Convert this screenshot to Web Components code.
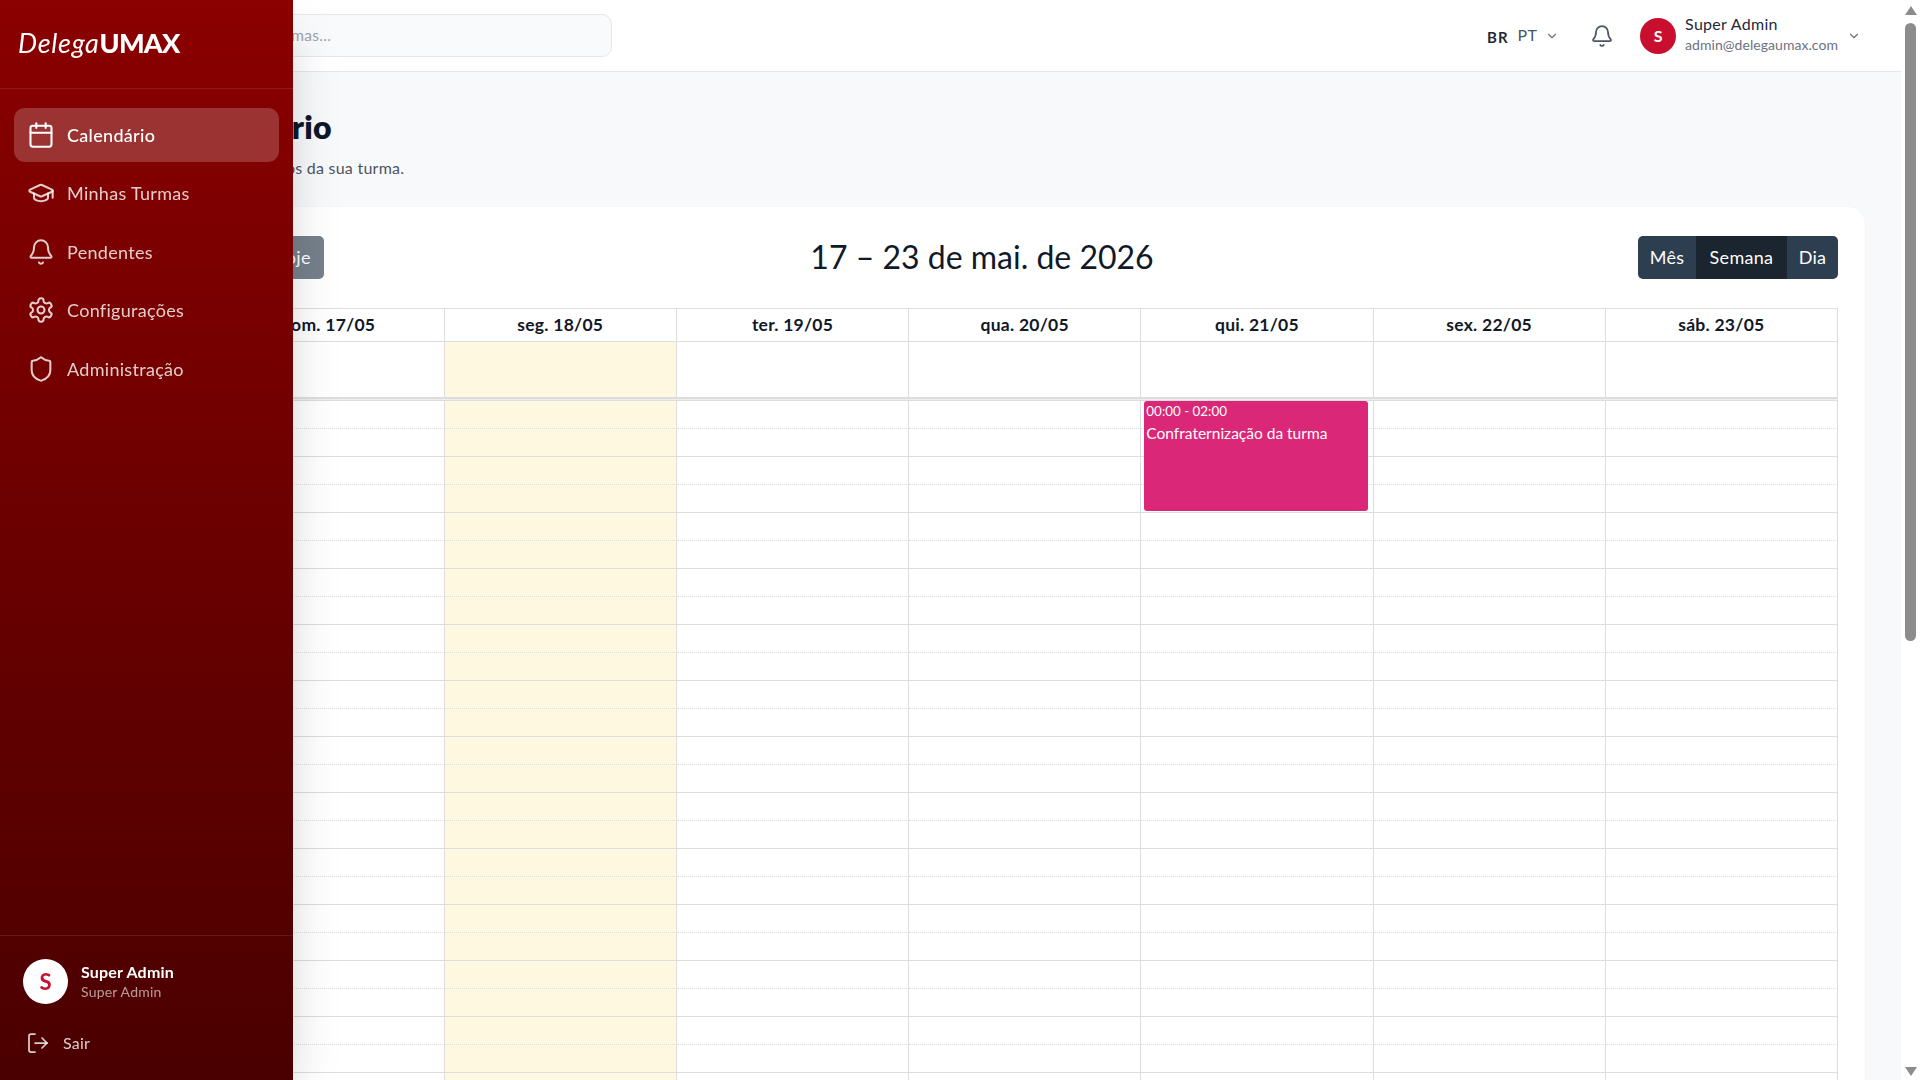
<!DOCTYPE html>
<html lang="pt-BR">
<head>
<meta charset="utf-8">
<title>DelegaUMAX</title>
<style>
html,body{margin:0;height:100%;overflow:hidden;}
body{display:flex;font-family:Lato,"Noto Sans",sans-serif;background:#f8f9fb;color:#111827;}
</style>
</head>
<body>
<app-main>
  <app-topbar></app-topbar>
  <page-head title="Meu Calendário" sub="Veja datas e compromissos da sua turma."></page-head>
  <week-calendar></week-calendar>
</app-main>
<fake-scrollbar></fake-scrollbar>
<app-sidebar></app-sidebar>
<script>
const ICONS={
calendar:'<path d="M8 2v4"/><path d="M16 2v4"/><rect x="3" y="4" width="18" height="18" rx="2"/><path d="M3 10h18"/>',
cap:'<path d="M21.42 10.922a1 1 0 0 0-.019-1.838L12.83 5.18a2 2 0 0 0-1.66 0L2.6 9.08a1 1 0 0 0 0 1.832l8.57 3.908a2 2 0 0 0 1.66 0z"/><path d="M22 10v6"/><path d="M6 12.5V16a6 3 0 0 0 12 0v-3.5"/>',
bell:'<path d="M10.268 21a2 2 0 0 0 3.464 0"/><path d="M3.262 15.326A1 1 0 0 0 4 17h16a1 1 0 0 0 .74-1.673C19.41 13.956 18 12.499 18 8A6 6 0 0 0 6 8c0 4.499-1.411 5.956-2.738 7.326"/>',
gear:'<path d="M12.22 2h-.44a2 2 0 0 0-2 2v.18a2 2 0 0 1-1 1.73l-.43.25a2 2 0 0 1-2 0l-.15-.08a2 2 0 0 0-2.73.73l-.22.38a2 2 0 0 0 .73 2.73l.15.1a2 2 0 0 1 1 1.72v.51a2 2 0 0 1-1 1.74l-.15.09a2 2 0 0 0-.73 2.73l.22.38a2 2 0 0 0 2.73.73l.15-.08a2 2 0 0 1 2 0l.43.25a2 2 0 0 1 1 1.73V20a2 2 0 0 0 2 2h.44a2 2 0 0 0 2-2v-.18a2 2 0 0 1 1-1.73l.43-.25a2 2 0 0 1 2 0l.15.08a2 2 0 0 0 2.73-.73l.22-.39a2 2 0 0 0-.73-2.73l-.15-.08a2 2 0 0 1-1-1.74v-.5a2 2 0 0 1 1-1.74l.15-.09a2 2 0 0 0 .73-2.73l-.22-.38a2 2 0 0 0-2.73-.73l-.15.08a2 2 0 0 1-2 0l-.43-.25a2 2 0 0 1-1-1.73V4a2 2 0 0 0-2-2z"/><circle cx="12" cy="12" r="3"/>',
shield:'<path d="M20 13c0 5-3.5 7.5-7.66 8.95a1 1 0 0 1-.67-.01C7.5 20.5 4 18 4 13V6a1 1 0 0 1 1-1c2 0 4.5-1.2 6.24-2.72a1.17 1.17 0 0 1 1.52 0C14.51 3.81 17 5 19 5a1 1 0 0 1 1 1z"/>',
logout:'<path d="M9 21H5a2 2 0 0 1-2-2V5a2 2 0 0 1 2-2h4"/><path d="m16 17 5-5-5-5"/><path d="M21 12H9"/>',
chev:'<path d="m6 9 6 6 6-6"/>'
};
const icon=(n,s,w=2)=>`<svg width="${s}" height="${s}" viewBox="0 0 24 24" fill="none" stroke="currentColor" stroke-width="${w}" stroke-linecap="round" stroke-linejoin="round">${ICONS[n]}</svg>`;
class Base extends HTMLElement{
  render(html){this.attachShadow({mode:'open'}).innerHTML=html;}
}
customElements.define('app-main',class extends Base{connectedCallback(){this.render(`<style>
:host{display:flex;flex-direction:column;flex:1;min-width:0;height:100vh;overflow:hidden}
</style><slot></slot>`)}});
customElements.define('app-topbar',class extends Base{connectedCallback(){this.render(`<style>
:host{display:flex;flex:none;align-items:center;height:71px;background:#fff;border-bottom:1px solid #e5e7eb;padding:0 40px 0 99px}
.search{border:1px solid #e5e7eb;border-radius:10px;background:#f9fafb;display:flex;align-items:center;padding-left:55px;box-sizing:border-box;width:513px;height:43px;color:#9ca3af;font-size:15.5px;letter-spacing:.3px;padding-bottom:2px}
.right{margin-left:auto;display:flex;align-items:center}
.flag{font-weight:700;font-size:15px;letter-spacing:1px;color:#1f2937;margin-top:2px}
.pt{font-size:16px;color:#4b5563;margin-left:9px;letter-spacing:.2px;margin-top:-2px}
.c1{display:flex;margin-left:8px;color:#6b7280;margin-top:1px}
.bell{display:flex;color:#4b5563;margin-left:31px}
.av{width:36px;height:36px;border-radius:50%;background:#c8102e;color:#fff;font-weight:700;font-size:16px;display:flex;align-items:center;justify-content:center;margin-left:26px}
.who{margin-left:9px;line-height:1;margin-top:-3px}
.n{font-size:16px;color:#1f2937;letter-spacing:.3px;margin-bottom:6px;font-weight:400}
.e{font-size:14px;color:#6b7280;letter-spacing:.05px}
.c2{display:flex;margin-left:9px;color:#6b7280;margin-top:1px}
</style>
<div class="search">Buscar eventos, turmas...</div>
<div class="right">
<span class="flag">BR</span><span class="pt">PT</span><span class="c1">${icon('chev',14)}</span>
<span class="bell">${icon('bell',24,1.75)}</span>
<span class="av">S</span>
<div class="who"><div class="n">Super Admin</div><div class="e">admin@delegaumax.com</div></div>
<span class="c2">${icon('chev',14)}</span>
</div>`)}});
customElements.define('page-head',class extends Base{connectedCallback(){this.render(`<style>
:host{display:block;flex:none;height:135px;box-sizing:border-box;padding:34px 36px 0 99px}
h1{margin:0;font-size:32px;line-height:42px;font-weight:800;color:#0f172a;letter-spacing:.3px}
p{margin:9px 0 0 9px;font-size:16px;line-height:22px;color:#4b5563;letter-spacing:.25px}
</style><h1>${this.getAttribute('title')}</h1><p>${this.getAttribute('sub')}</p>`)}});
customElements.define('week-calendar',class extends Base{connectedCallback(){
const days=['dom. 17/05','seg. 18/05','ter. 19/05','qua. 20/05','qui. 21/05','sex. 22/05','sáb. 23/05'];
let cells='<div class="c h"></div>'+days.map(d=>`<div class="c h">${d}</div>`).join('');
cells+='<div class="c ad"></div>'+days.map((d,i)=>`<div class="c ad${i==1?' today':''}"></div>`).join('');
cells+='<div class="div"></div>';
for(let r=0;r<30;r++){
  cells+=`<div class="c s${r%2?'':' dot'}"></div>`;
  for(let i=0;i<7;i++){
    let ev='';
    if(r==0&&i==4)ev='<div class="ev"><div class="t">00:00 - 02:00</div><div class="ti">Confraternização da turma</div></div>';
    cells+=`<div class="c s${r%2?'':' dot'}${i==1?' today':''}">${ev}</div>`;
  }
}
this.render(`<style>
:host{display:block;flex:none;margin:0 36px 0 99px;background:#fff;border-radius:18px;padding:29px 27px 0;box-shadow:0 1px 3px rgba(0,0,0,.03)}
.bar{display:flex;align-items:center;justify-content:space-between;height:43px;margin-bottom:29px}
.b{height:43px;box-sizing:border-box;display:flex;align-items:center;padding:0 12px 2px;color:#fff;font-size:18px;letter-spacing:.3px;background:#2c3e50}
.left,.right{display:flex;flex:1}
.right{justify-content:flex-end}
.right .b:first-child{border-radius:5px 0 0 5px;width:58px;justify-content:center;padding:0 0 2px}
.right .b:last-child{border-radius:0 5px 5px 0;width:51px;justify-content:center;padding:0 0 2px}
.right .on{background:#1a252f;width:91px;justify-content:center;padding:0 0 2px}
.left{gap:8px}
.nav{width:54.5px;border-radius:5px;justify-content:center;padding:0 0 2px}
.today-b{background:#2c3e50;opacity:.65;border-radius:5px;padding:0 13px 2px;margin-left:8px}
h2{margin:0;font-size:32px;font-weight:400;letter-spacing:0;color:#111827;white-space:nowrap;position:relative;top:-1px}
.grid{display:grid;grid-template-columns:85.5px repeat(7,1fr);border-top:1px solid #ddd;border-left:1px solid #ddd}
.c{border-right:1px solid #ddd;border-bottom:1px solid #ddd;box-sizing:border-box;background:#fff}
.h{height:33px;display:flex;align-items:center;justify-content:center;font-weight:700;font-size:17.5px;letter-spacing:.25px;color:#111827;padding-bottom:1px}
.ad{height:56px}
.div{grid-column:1/-1;height:3px;box-sizing:border-box;background:#eee;border-top:1px solid #ddd;border-bottom:1px solid #ddd}
.s{height:28px;position:relative;font-size:14px;color:#374151}
.dot{border-bottom:1px dotted #ddd}
.today{background:#fef8e0}
.ev{position:absolute;z-index:2;left:3px;right:5px;top:0;height:110px;background:#db2777;border-radius:3px;color:#fff;padding:2px 2px 0;box-sizing:border-box}
.t{font-size:13.4px;line-height:17px}
.ti{font-size:15.5px;line-height:20px;margin-top:3px;white-space:nowrap}
</style>
<div class="bar">
<div class="left"><div class="b nav">‹</div><div class="b nav">›</div><div class="b today-b">Hoje</div></div>
<h2>17 – 23 de mai. de 2026</h2>
<div class="right"><div class="b">Mês</div><div class="b on">Semana</div><div class="b">Dia</div></div>
</div>
<div class="grid">${cells}</div>`)}});
customElements.define('fake-scrollbar',class extends Base{connectedCallback(){this.render(`<style>
:host{display:flex;flex:none;flex-direction:column;align-items:center;width:19px;height:100vh;background:#fff;box-sizing:border-box;padding:6px 0 4px}
.a{width:0;height:0;border-left:6.5px solid transparent;border-right:6.5px solid transparent;flex:none}
.u{border-bottom:9px solid #8c8c8c}
.d{border-top:9px solid #8c8c8c;margin-top:auto}
.th{width:11px;height:618px;background:#8c8c8c;border-radius:6px;margin-top:8px;flex:none}
</style><div class="a u"></div><div class="th"></div><div class="a d"></div>`)}});
customElements.define('nav-item',class extends Base{connectedCallback(){
const on=this.hasAttribute('active');
this.render(`<style>
:host{display:flex;align-items:center;height:54px;border-radius:11px;padding:0 12.5px;gap:12.5px;font-size:18px;letter-spacing:.3px;color:${on?'#fff':'rgba(255,255,255,.8)'};background:${on?'rgba(255,255,255,.2)':'transparent'};font-weight:${on?500:400}}
svg{flex:none;display:block}
</style>${icon(this.getAttribute('icon'),28,1.75)}<slot></slot>`)}});
customElements.define('app-sidebar',class extends Base{connectedCallback(){this.render(`<style>
:host{position:fixed;left:0;top:0;bottom:0;width:293px;z-index:10;display:flex;flex-direction:column;background:linear-gradient(180deg,#8b0000 0%,#4a0000 100%);box-shadow:0 25px 50px -12px rgba(0,0,0,.25);color:#fff}
.logo{height:89px;box-sizing:border-box;flex:none;border-bottom:1px solid rgba(255,255,255,.1);display:flex;align-items:center;padding:0 0 3px 18px;white-space:nowrap;font-size:27px}
.logo i{font-weight:400;letter-spacing:.7px}
.logo b{font-weight:900;letter-spacing:-.8px}
nav{flex:1;display:flex;flex-direction:column;gap:4.4px;padding:19px 14px 0}
.foot{border-top:1px solid rgba(255,255,255,.1);flex:none;height:145px;box-sizing:border-box;padding:23px 23px 0}
.u{display:flex;align-items:center;gap:13px}
.a{width:45px;height:45px;border-radius:50%;background:#fff;color:#c8102e;display:flex;align-items:center;justify-content:center;font-size:22px;font-weight:700}
.n{font-size:16px;font-weight:700;letter-spacing:.2px;line-height:20px}
.r{font-size:14px;color:rgba(255,255,255,.6);line-height:20px;letter-spacing:.2px}
.out{display:flex;align-items:center;gap:13px;margin:26.5px 0 0 3px;font-size:16px;color:rgba(255,255,255,.8);letter-spacing:.2px}
.out svg{display:block}
</style>
<div class="logo"><i>Delega</i><b>UMAX</b></div>
<nav>
<nav-item icon="calendar" active>Calendário</nav-item>
<nav-item icon="cap">Minhas Turmas</nav-item>
<nav-item icon="bell">Pendentes</nav-item>
<nav-item icon="gear">Configurações</nav-item>
<nav-item icon="shield">Administração</nav-item>
</nav>
<div class="foot">
<div class="u"><div class="a">S</div><div><div class="n">Super Admin</div><div class="r">Super Admin</div></div></div>
<div class="out">${icon('logout',24,1.75)}<span>Sair</span></div>
</div>`)}});
</script>
</body>
</html>
